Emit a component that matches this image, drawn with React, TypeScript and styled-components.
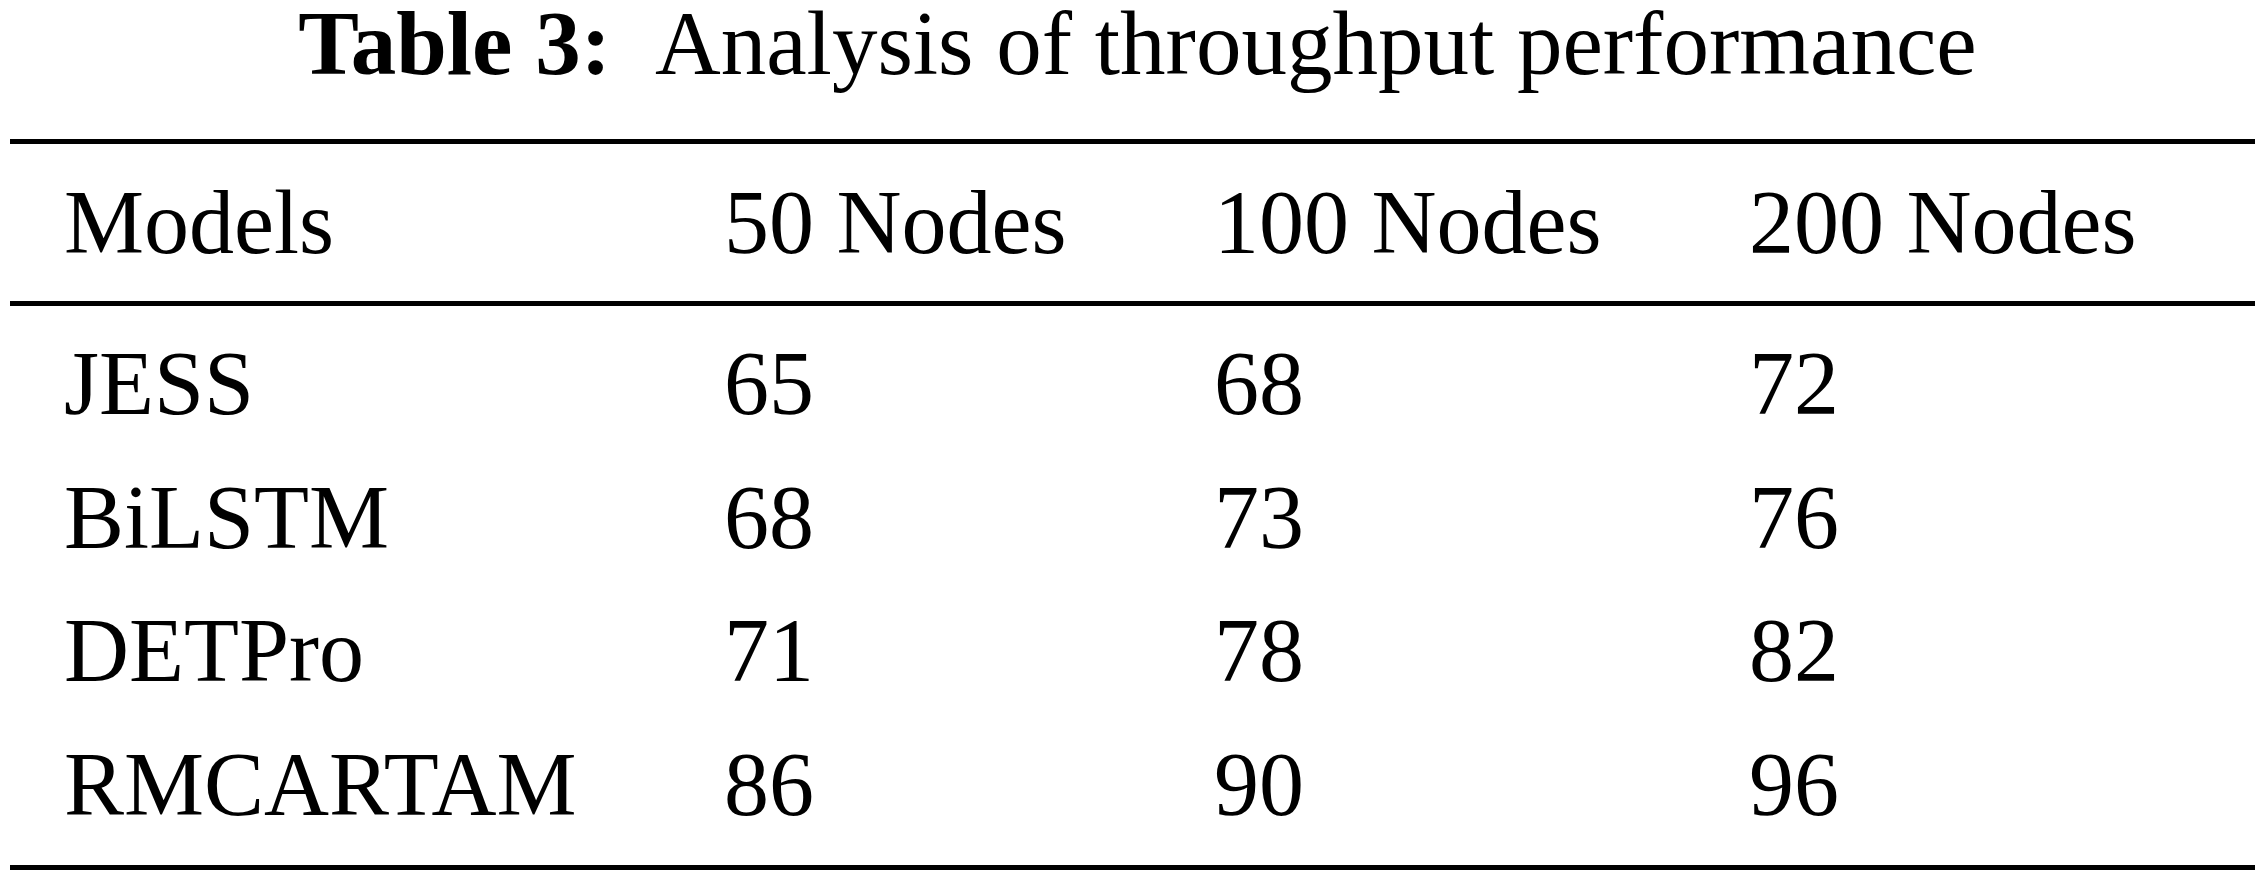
import React from "react";
import styled, { createGlobalStyle } from "styled-components";

const GlobalStyle = createGlobalStyle`
  html, body {
    margin: 0;
    padding: 0;
    background: #ffffff;
  }
  body {
    font-family: "Liberation Serif", "Times New Roman", serif;
    color: #000000;
  }
`;

const Page = styled.div`
  width: 2265px;
  height: 880px;
  background: #ffffff;
  overflow: hidden;
`;

const Caption = styled.div`
  display: flex;
  justify-content: center;
  padding-left: 10px;
  font-size: 91px;
  line-height: 88px;
  white-space: pre;
  margin-bottom: 51px;
`;

const CaptionLabel = styled.span`
  font-weight: 700;
  margin-right: 44px;
`;

const CaptionText = styled.span`
  font-weight: 400;
`;

const Table = styled.div`
  margin: 0 10px;
  border-top: 5px solid #000;
  border-bottom: 5px solid #000;
`;

const Row = styled.div<{ $head?: boolean }>`
  display: grid;
  grid-template-columns: 660px 490px 535px 1fr;
  padding-left: 54px;
  font-size: 90px;
  line-height: ${(p) => (p.$head ? "157px" : "133.5px")};
  white-space: nowrap;
`;

const Head = styled.div`
  border-bottom: 5px solid #000;
`;

const Body = styled.div`
  padding-top: 11px;
  padding-bottom: 14px;
`;

const Cell = styled.div``;

const header = ["Models", "50 Nodes", "100 Nodes", "200 Nodes"];
const rows: [string, number, number, number][] = [
  ["JESS", 65, 68, 72],
  ["BiLSTM", 68, 73, 76],
  ["DETPro", 71, 78, 82],
  ["RMCARTAM", 86, 90, 96],
];

export default function App() {
  return (
    <Page>
      <GlobalStyle />
      <Caption>
        <CaptionLabel>Table 3:</CaptionLabel>
        <CaptionText>Analysis of throughput performance</CaptionText>
      </Caption>
      <Table>
        <Head>
          <Row $head>
            {header.map((h) => (
              <Cell key={h}>{h}</Cell>
            ))}
          </Row>
        </Head>
        <Body>
          {rows.map((r) => (
            <Row key={r[0]}>
              {r.map((c, i) => (
                <Cell key={i}>{c}</Cell>
              ))}
            </Row>
          ))}
        </Body>
      </Table>
    </Page>
  );
}
